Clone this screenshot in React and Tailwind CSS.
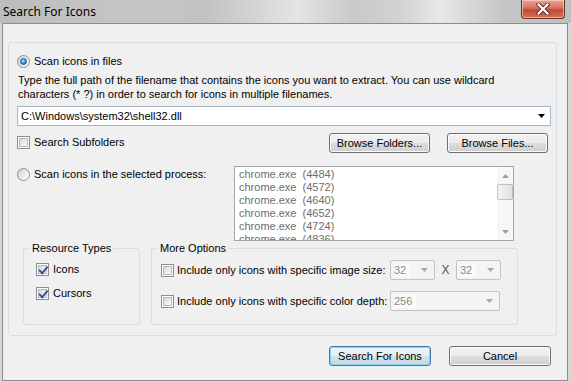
import React from "react";

const body = { fontFamily: '"Liberation Sans", Arial, sans-serif' };

function CheckBox({ checked }) {
  return (
    <span className="relative flex h-[13px] w-[13px] shrink-0 border border-[#8e8f8f] bg-white p-[1px]">
      <span className="flex-1 border border-[#b6babf] bg-[linear-gradient(135deg,#d4d7db_0%,#eceef0_60%,#fbfbfb_100%)]" />
      {checked && (
        <svg className="absolute inset-0" width="13" height="13" viewBox="0 0 13 13">
          <path d="M2.8 6.6 L5.2 9.2 L10 3.4" fill="none" stroke="#3a4f8c" strokeWidth="1.9" strokeLinecap="square" />
        </svg>
      )}
    </span>
  );
}

function Radio({ checked }) {
  return (
    <span className="flex h-[13px] w-[13px] shrink-0 items-center justify-center rounded-full border border-[#8e8f8f] bg-[linear-gradient(135deg,#cdd0d4_0%,#f2f3f4_70%,#ffffff_100%)]">
      {checked && (
        <span className="h-[7px] w-[7px] rounded-full border border-[#1a4f8a] bg-[radial-gradient(circle_at_40%_35%,#b8ecff_0%,#3fa6e8_45%,#1a5fa8_100%)]" />
      )}
    </span>
  );
}

function Button({ children, w, def }) {
  return (
    <div
      className={
        "flex h-[20px] items-center justify-center rounded-[3px] border text-[11px] text-black " +
        (def
          ? "border-[#3c7fb1] bg-[linear-gradient(to_bottom,#eef4f8_0%,#e6eef4_50%,#d6e2ec_50%,#cad7e2_100%)] shadow-[inset_0_0_0_1px_#7fd4f6]"
          : "border-[#707070] bg-[linear-gradient(to_bottom,#f2f2f2_0%,#ebebeb_50%,#dddddd_50%,#cfcfcf_100%)] shadow-[inset_0_0_0_1px_#fbfbfb]")
      }
      style={{ width: w }}
    >
      {children}
    </div>
  );
}

function DisabledCombo({ value, w }) {
  return (
    <div
      className="flex h-[20px] items-center justify-between rounded-[2px] border border-[#c3c3c3] bg-[#f4f4f4] pl-[3px] pr-[6px] text-[11px] text-[#8a8a8a]"
      style={{ width: w }}
    >
      <span className="bg-[#fafafa] pr-[4px]">{value}</span>
      <svg width="7" height="4" viewBox="0 0 7 4">
        <path d="M0 0 H7 L3.5 4 Z" fill="#a8a8a8" />
      </svg>
    </div>
  );
}

function GroupBox({ label, className, children }) {
  return (
    <div className={"relative rounded-[3px] border border-[#d5dfe5] " + className}>
      {label && (
        <span className="absolute left-[6px] top-[-8px] bg-[#f0f0f0] px-[2px] text-[11px] leading-[14px] text-black">
          {label}
        </span>
      )}
      {children}
    </div>
  );
}

const procs = ["4484", "4572", "4640", "4652", "4724", "4836"];

export default function App() {
  return (
    <div className="flex h-[382px] w-[571px] flex-col overflow-hidden bg-[#d6d6d6] pb-[1px] pl-[2px] pr-[3px]" style={body}>
      {/* Title bar */}
      <div className="-ml-[2px] -mr-[3px] flex h-[23px] shrink-0 items-start justify-between bg-[linear-gradient(90deg,#bdbdbd_0%,#c6c6c6_25%,#c2c2c2_36%,#e4e4e4_52%,#c9c9c9_62%,#d2d2d2_70%,#e8e8e8_77%,#c6c6c6_88%,#bfbfbf_100%)]">
        <span
          className="pl-[3px] pt-[4px] text-[12px] leading-[15px] text-black"
          style={{ fontFamily: '"Noto Sans", "Open Sans", sans-serif' }}
        >
          Search For Icons
        </span>
        <div className="mr-[6px] flex h-[19px] w-[44px] items-center justify-center rounded-b-[4px] border border-t-0 border-[#6a2f26] bg-[linear-gradient(to_bottom,#e8a394_0%,#d8705e_45%,#c14a35_55%,#d2735c_100%)] shadow-[inset_0_0_0_1px_rgba(255,220,210,0.6)]">
          <svg width="14" height="12" viewBox="0 0 14 12">
            <path d="M2.5 1.5 L11.5 10.5 M11.5 1.5 L2.5 10.5" stroke="#5a2a22" strokeWidth="4" strokeLinecap="square" />
            <path d="M2.5 1.5 L11.5 10.5 M11.5 1.5 L2.5 10.5" stroke="#ffffff" strokeWidth="2.2" strokeLinecap="square" />
          </svg>
        </div>
      </div>

      {/* Client area */}
      <div className="flex flex-1 flex-col border border-[#8c8c8c] bg-[#f0f0f0] text-[11px] leading-[13px] text-black">
        <GroupBox className="ml-[5px] mt-[18px] h-[294px] w-[549px]">
          <div className="flex flex-col pl-[8px]">
            <div className="mt-[12px] flex h-[13px] items-center gap-[4px]">
              <Radio checked />
              <span>Scan icons in files</span>
            </div>
            <p className="mt-[5px] w-[530px] pl-[1px] leading-[14px]">
              Type the full path of the filename that contains the icons you want to extract. You can use wildcard characters (* ?) in order to search for icons in multiple filenames.
            </p>
            <div className="mt-[5px] flex h-[20px] w-[534px] items-center justify-between border border-[#a9b6c6] bg-white pl-[3px] pr-[5px]">
              <span>C:\Windows\system32\shell32.dll</span>
              <svg width="7" height="4" viewBox="0 0 7 4">
                <path d="M0 0 H7 L3.5 4 Z" fill="#000" />
              </svg>
            </div>
            <div className="mt-[7px] flex h-[20px] items-center">
              <div className="mt-[-2px] flex items-center gap-[4px]">
                <CheckBox />
                <span>Search Subfolders</span>
              </div>
              <div className="ml-auto mr-[8px] flex gap-[17px]">
                <Button w={101}>Browse Folders...</Button>
                <Button w={101}>Browse Files...</Button>
              </div>
            </div>
            <div className="mt-[13px] flex items-start">
              <div className="mt-[2px] flex h-[13px] w-[217px] shrink-0 items-center gap-[4px]">
                <Radio />
                <span>Scan icons in the selected process:</span>
              </div>
              <div className="flex h-[75px] w-[280px] border border-[#a3a6ab] bg-white">
                <div className="flex-1 overflow-hidden pl-[4px] pt-[1px] text-[#6d6d6d]">
                  {procs.map((p) => (
                    <div key={p} className="whitespace-pre leading-[13px]">
                      {"chrome.exe  (" + p + ")"}
                    </div>
                  ))}
                </div>
                <div className="flex w-[16px] flex-col bg-[#f7f7f7]">
                  <div className="flex h-[17px] items-center justify-center">
                    <svg width="7" height="4" viewBox="0 0 7 4">
                      <path d="M0 4 H7 L3.5 0 Z" fill="#a0a0a0" />
                    </svg>
                  </div>
                  <div className="h-[16px] rounded-[2px] border border-[#bfbfbf] bg-[linear-gradient(to_right,#f4f4f4,#e2e2e2)]" />
                  <div className="flex-1" />
                  <div className="flex h-[17px] items-center justify-center">
                    <svg width="7" height="4" viewBox="0 0 7 4">
                      <path d="M0 0 H7 L3.5 4 Z" fill="#a0a0a0" />
                    </svg>
                  </div>
                </div>
              </div>
            </div>
            <div className="mt-[7px] flex gap-[11px] pl-[6px]">
              <GroupBox label="Resource Types" className="h-[77px] w-[117px]">
                <div className="flex flex-col gap-[11px] pl-[12px] pt-[14px]">
                  <div className="flex items-center gap-[4px]">
                    <CheckBox checked />
                    <span>Icons</span>
                  </div>
                  <div className="flex items-center gap-[4px]">
                    <CheckBox checked />
                    <span>Cursors</span>
                  </div>
                </div>
              </GroupBox>
              <GroupBox label="More Options" className="h-[77px] w-[367px]">
                <div className="flex flex-col gap-[11px] pl-[9px] pt-[11px]">
                  <div className="flex items-center">
                    <div className="flex w-[229px] items-center gap-[3px]">
                      <CheckBox />
                      <span>Include only icons with specific image size:</span>
                    </div>
                    <DisabledCombo value="32" w={45} />
                    <span className="w-[21px] text-center text-[12px] text-[#555]">X</span>
                    <DisabledCombo value="32" w={45} />
                  </div>
                  <div className="flex items-center">
                    <div className="flex w-[229px] items-center gap-[3px]">
                      <CheckBox />
                      <span>Include only icons with specific color depth:</span>
                    </div>
                    <DisabledCombo value="256" w={110} />
                  </div>
                </div>
              </GroupBox>
            </div>
          </div>
        </GroupBox>
        <div className="mt-[10px] flex justify-end gap-[18px] pr-[16px]">
          <Button w={102} def>
            Search For Icons
          </Button>
          <Button w={102}>Cancel</Button>
        </div>
      </div>
    </div>
  );
}
